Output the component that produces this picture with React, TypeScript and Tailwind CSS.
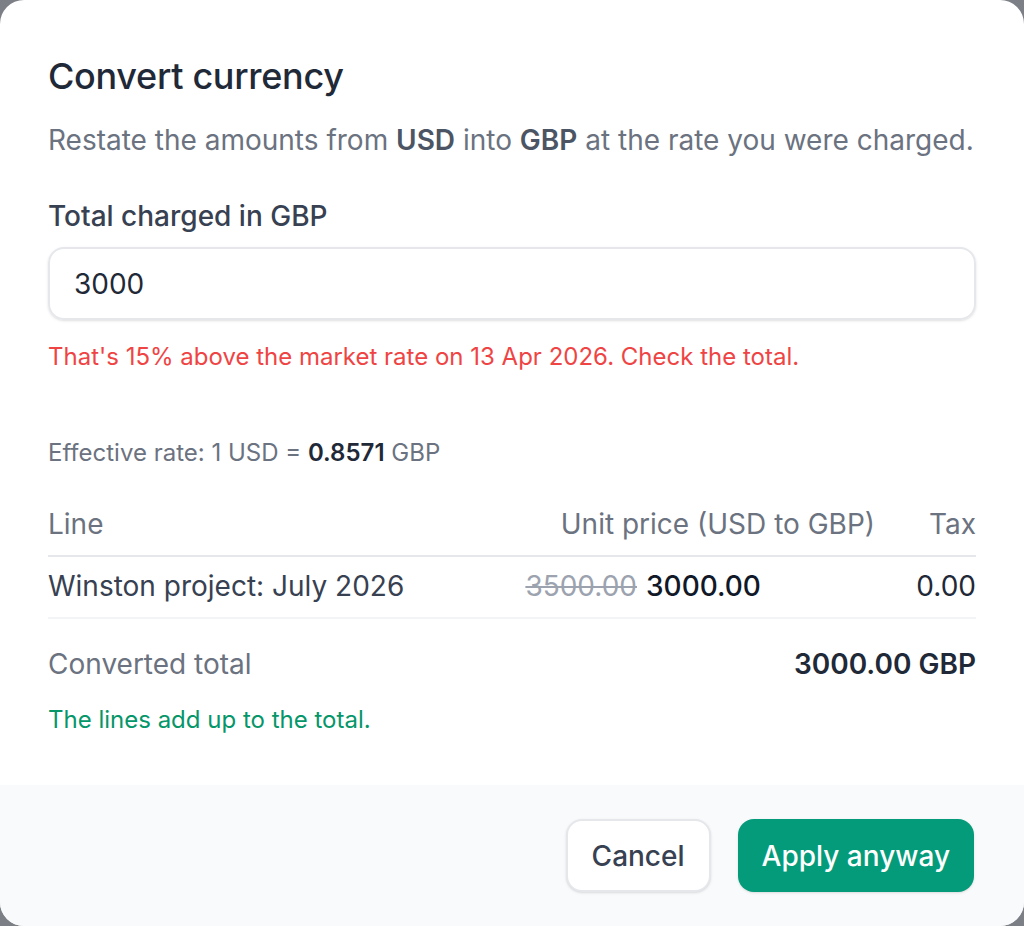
import React from "react";

export default function App() {
  return (
    <div
      className="min-h-screen bg-[#7c7f86]"
      style={{ fontFamily: "Inter, 'Noto Sans', sans-serif" }}
    >
      <div className="w-[1024px] h-[926px] bg-white rounded-[24px] overflow-hidden flex flex-col">
        <div className="flex-1 px-12 pt-12">
          <h1 className="text-[36px] leading-[56px] font-medium text-[#1f2937] tracking-[-0.3px]">
            Convert currency
          </h1>
          <p className="mt-4 text-[28px] leading-[40px] text-[#6b7280]">
            Restate the amounts from{" "}
            <span className="font-semibold text-[#4b5563]">USD</span> into{" "}
            <span className="font-semibold text-[#4b5563]">GBP</span> at the rate you were charged.
          </p>

          <label className="block mt-[36px] text-[28px] leading-[40px] font-medium text-[#374151]">
            Total charged in GBP
          </label>
          <div className="mt-[11px] h-[73px] rounded-[16px] border-2 border-[#e5e7eb] shadow-sm flex items-center px-6 text-[28px] text-[#1f2937]">
            3000
          </div>
          <p className="mt-[21px] text-[24px] leading-[32px] text-[#ef4444]">
            That's 15% above the market rate on 13 Apr 2026. Check the total.
          </p>

          <p className="mt-[64px] text-[24px] leading-[32px] text-[#6b7280]">
            Effective rate: 1 USD = <span className="font-semibold text-[#1f2937]">0.8571</span> GBP
          </p>

          <div className="mt-[35px]">
            <div className="grid grid-cols-[1fr_420px_101px] pb-[11px] border-b-2 border-[#e5e7eb] text-[28px] leading-[40px] text-[#6b7280]">
              <div>Line</div>
              <div className="text-right">Unit price (USD to GBP)</div>
              <div className="text-right">Tax</div>
            </div>
            <div className="grid grid-cols-[1fr_420px_101px] pt-[9px] pb-[11px] border-b-2 border-[#f3f4f6] text-[28px] leading-[40px]">
              <div className="text-[#374151]">Winston project: July 2026</div>
              <div className="flex justify-end">
                <span className="text-[#9ca3af] line-through">3500.00</span>
                <span className="w-[238px] pl-[9px] font-medium text-[#111827]">3000.00</span>
              </div>
              <div className="text-right text-[#1f2937]">0.00</div>
            </div>
          </div>

          <div className="mt-[25px] flex justify-between text-[28px] leading-[40px]">
            <span className="text-[#6b7280]">Converted total</span>
            <span className="font-semibold text-[#1f2937]">3000.00 GBP</span>
          </div>
          <p className="mt-[20px] text-[24px] leading-[32px] text-[#059669]">
            The lines add up to the total.
          </p>
        </div>

        <div className="bg-[#f9fafb] pl-12 pr-[50px] py-[34px] flex justify-end gap-[27px]">
          <button className="h-[73px] px-6 rounded-[16px] bg-white border-2 border-[#e5e7eb] shadow-sm text-[28px] font-medium text-[#374151]">
            Cancel
          </button>
          <button className="h-[73px] px-6 rounded-[16px] bg-[#049b7b] shadow-sm text-[28px] font-medium text-white">
            Apply anyway
          </button>
        </div>
      </div>
    </div>
  );
}
